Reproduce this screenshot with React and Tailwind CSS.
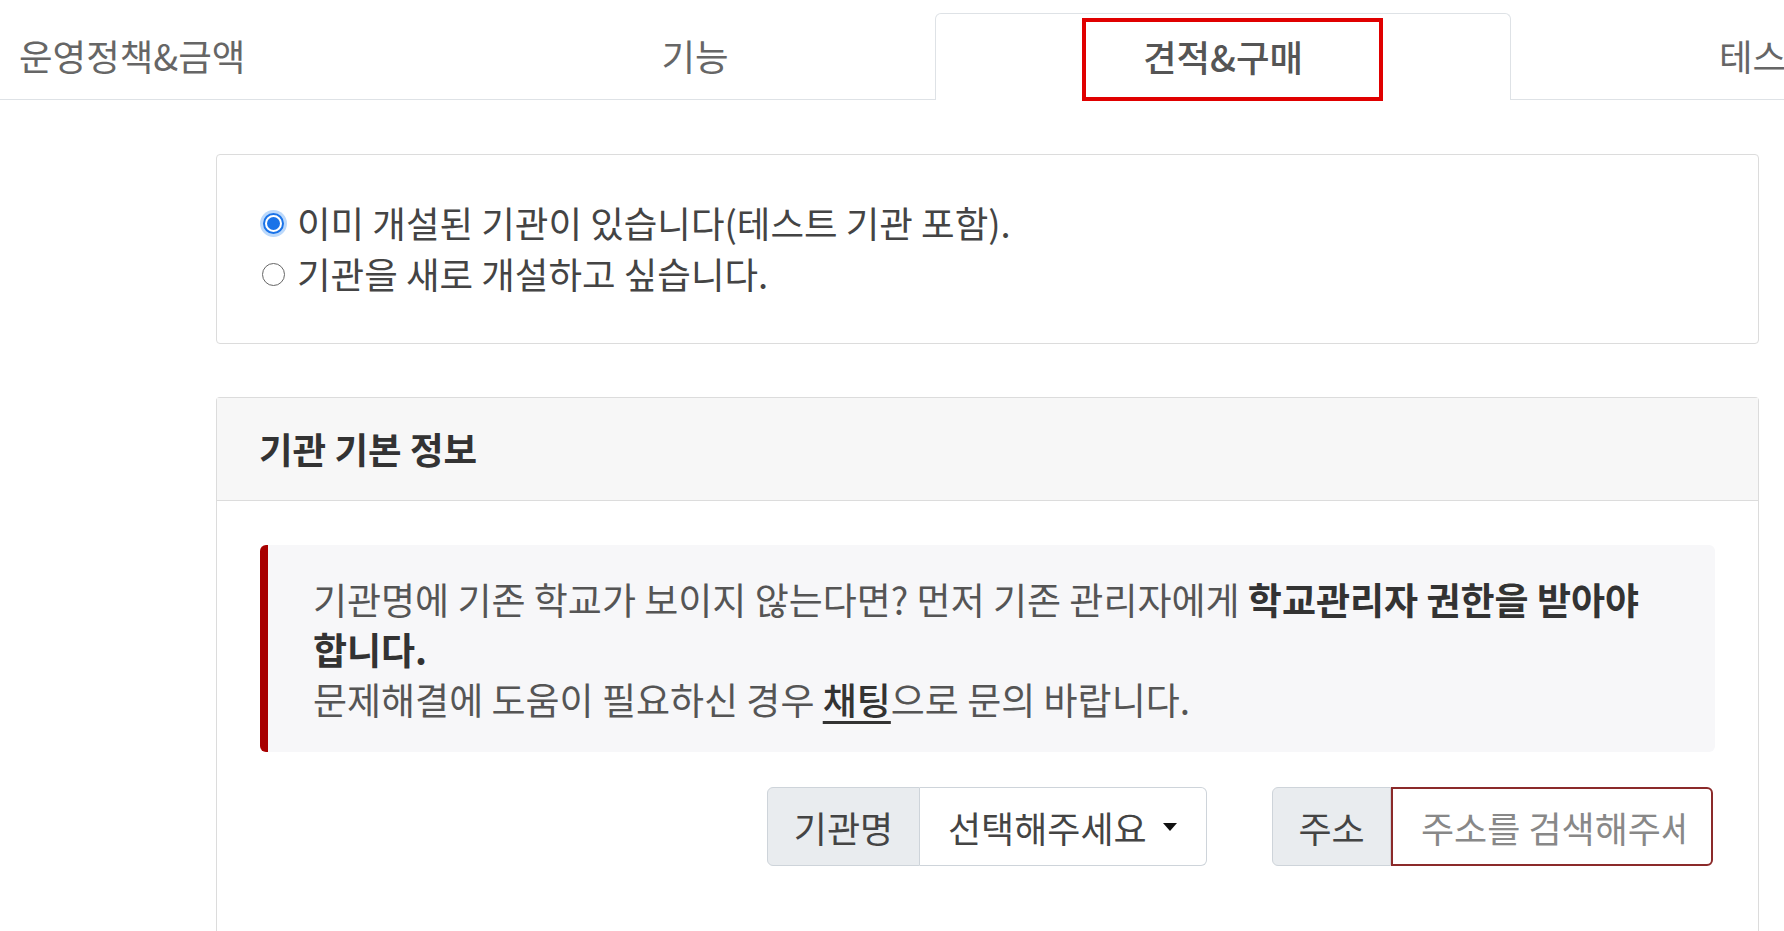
import React from "react";

const font = { fontFamily: '"Noto Sans CJK KR", "Noto Sans", sans-serif' };

function Radio({ checked }) {
  if (checked) {
    return (
      <span className="flex h-[27px] w-[27px] shrink-0 items-center justify-center rounded-full bg-[#bcd9fb]">
        <span className="flex h-[21px] w-[21px] items-center justify-center rounded-full border-[2px] border-[#1a73e8] bg-white">
          <span className="h-[13px] w-[13px] rounded-full bg-[#1a73e8]" />
        </span>
      </span>
    );
  }
  return (
    <span className="flex h-[27px] w-[27px] shrink-0 items-center justify-center">
      <span className="h-[23px] w-[23px] rounded-full border-[1.5px] border-[#666] bg-white" />
    </span>
  );
}

function Tabs() {
  return (
    <div className="flex h-[100px] items-end border-b border-[#dee2e6] text-[36.5px] text-[#666]">
      <div className="flex h-full w-[455px] shrink-0 items-center pl-[19px] pt-[14px]">운영정책&amp;금액</div>
      <div className="flex h-full w-[480px] shrink-0 items-center justify-center pt-[14px]">기능</div>
      <div className="relative mb-[-1px] flex h-[87px] w-[576px] shrink-0 items-center justify-center rounded-t-[6px] border border-b-0 border-[#dee2e6] bg-white font-medium text-[#555]">
        <div className="absolute left-[146px] top-[4px] h-[83px] w-[301px] border-[4px] border-[#e00000]" />
        견적&amp;구매
      </div>
      <div className="flex h-full min-w-0 flex-1 items-center overflow-hidden whitespace-nowrap pl-[208px] pt-[14px]">테스트</div>
    </div>
  );
}

export default function App() {
  return (
    <div className="h-[931px] w-full overflow-hidden bg-white" style={font}>
      <Tabs />
      <div className="pl-[216px] pr-[25px]">
        <div className="mt-[54px] flex h-[190px] flex-col justify-center gap-[19px] rounded-[4px] border border-[#dcdcdc] pl-[43px] text-[36.5px] text-[#444]">
          <label className="flex h-[32px] items-center gap-[10px]">
            <Radio checked />
            <span>이미 개설된 기관이 있습니다(테스트 기관 포함).</span>
          </label>
          <label className="flex h-[32px] items-center gap-[10px]">
            <Radio />
            <span>기관을 새로 개설하고 싶습니다.</span>
          </label>
        </div>

        <div className="mt-[53px] h-[600px] rounded-t-[4px] border border-b-0 border-[#dcdcdc]">
          <div className="flex h-[103px] items-center border-b border-[#dcdcdc] bg-[#f7f7f7] pl-[42px] text-[36.5px] font-bold text-[#333]">
            기관 기본 정보
          </div>
          <div className="px-[43px] pt-[44px]">
            <div className="flex h-[207px] items-center rounded-[6px] border-l-[8px] border-[#a80000] bg-[#f7f7f9] pl-[45px] pr-[50px] text-[37px] leading-[50px] text-[#555]">
              <p>
                기관명에 기존 학교가 보이지 않는다면? 먼저 기존 관리자에게{" "}
                <b className="font-bold text-[#333]">학교관리자 권한을 받아야 합니다.</b>
                <br />
                문제해결에 도움이 필요하신 경우{" "}
                <span className="font-medium text-[#333] underline underline-offset-[6px]">채팅</span>으로 문의 바랍니다.
              </p>
            </div>

            <div className="mt-[35px] flex justify-end gap-[65px] pr-[2px] text-[36px]">
              <div className="flex h-[79px] w-[440px]">
                <div className="flex w-[153px] shrink-0 items-center justify-center rounded-l-[6px] border border-[#ced4da] bg-[#e9ecef] text-[#444]">
                  기관명
                </div>
                <div className="flex min-w-0 flex-1 items-center justify-between rounded-r-[6px] border border-l-0 border-[#ced4da] bg-white pl-[28px] pr-[28px] text-[#444]">
                  <span>선택해주세요</span>
                  <svg width="16" height="10" viewBox="0 0 16 10">
                    <path d="M1 1h14L8 9z" fill="#111" />
                  </svg>
                </div>
              </div>
              <div className="flex h-[79px] w-[441px]">
                <div className="flex w-[119px] shrink-0 items-center justify-center rounded-l-[6px] border border-[#ced4da] bg-[#e9ecef] text-[#444]">
                  주소
                </div>
                <div className="flex min-w-0 flex-1 items-center rounded-r-[6px] border-[2px] border-[#8b2a2a] bg-white pl-[28px] pr-[26px]">
                  <span className="block min-w-0 overflow-hidden whitespace-nowrap text-[#888]">주소를 검색해주세요</span>
                </div>
              </div>
            </div>
          </div>
        </div>
      </div>
    </div>
  );
}
